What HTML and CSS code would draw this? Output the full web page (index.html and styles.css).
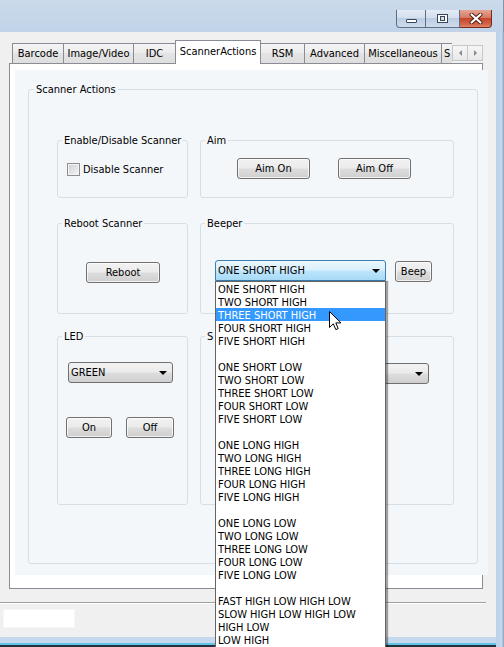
FILE: index.html
```html
<!DOCTYPE html>
<html>
<head>
<meta charset="utf-8">
<title>Scanner Actions</title>
<link rel="stylesheet" href="styles.css">
</head>
<body>
<div class="window">
  <div class="titlebar">
    <div class="caption-buttons">
      <div class="cbtn min"><span class="glyph-min"></span></div>
      <div class="cbtn max"><span class="glyph-max"><span class="glyph-max-inner"></span></span></div>
      <div class="cbtn close">
        <svg class="glyph-close" width="14" height="11" viewBox="0 0 14 11">
          <path d="M2.5 1.5 L11.5 9.5 M11.5 1.5 L2.5 9.5" stroke="#4a1a10" stroke-width="4" stroke-linecap="round"/>
          <path d="M2.5 1.5 L11.5 9.5 M11.5 1.5 L2.5 9.5" stroke="#ffffff" stroke-width="2.2" stroke-linecap="round"/>
        </svg>
      </div>
    </div>
  </div>

  <div class="client">
    <div class="tabctl">
      <div class="tabstrip">
        <div class="tabs">
          <div class="tab t-barcode">Barcode</div>
          <div class="tab t-image">Image/Video</div>
          <div class="tab t-idc">IDC</div>
          <div class="tab active">ScannerActions</div>
          <div class="tab t-rsm">RSM</div>
          <div class="tab t-adv">Advanced</div>
          <div class="tab t-misc">Miscellaneous</div>
          <div class="tab t-s">S</div>
        </div>
        <div class="tabscroll">
          <div class="sbtn"><span class="tri-left"></span></div>
          <div class="sbtn"><span class="tri-right"></span></div>
        </div>
      </div>
      <div class="panel">
        <div class="page">
          <div class="group main">
            <div class="legend">Scanner Actions</div>
            <div class="rows">
              <div class="row r1">
                <div class="group box-left">
                  <div class="legend">Enable/Disable Scanner</div>
                  <label class="check-line"><span class="checkbox"></span><span>Disable Scanner</span></label>
                </div>
                <div class="group box-right">
                  <div class="legend">Aim</div>
                  <div class="aim-buttons">
                    <div class="btn w73">Aim On</div>
                    <div class="btn w73">Aim Off</div>
                  </div>
                </div>
              </div>
              <div class="row r2">
                <div class="group box-left">
                  <div class="legend">Reboot Scanner</div>
                  <div class="btn reboot">Reboot</div>
                </div>
                <div class="group box-right">
                  <div class="legend">Beeper</div>
                  <div class="beeper-line">
                    <div class="combo open"><span>ONE SHORT HIGH</span><span class="arrow"></span></div>
                    <div class="btn beep">Beep</div>
                  </div>
                </div>
              </div>
              <div class="row r3">
                <div class="group box-left">
                  <div class="legend">LED</div>
                  <div class="combo led"><span>GREEN</span><span class="arrow"></span></div>
                  <div class="led-buttons">
                    <div class="btn on">On</div>
                    <div class="btn off">Off</div>
                  </div>
                </div>
                <div class="group box-right">
                  <div class="legend">S</div>
                  <div class="combo sound"><span class="arrow"></span></div>
                </div>
              </div>
            </div>
          </div>
        </div>
      </div>
    </div>
    <div class="separator"></div>
    <div class="statusbar"><div class="status-box"></div></div>
  </div>

  <div class="frame-right"></div>
  <div class="frame-bottom"></div>

  <ul class="droplist">
    <li>ONE SHORT HIGH</li>
    <li>TWO SHORT HIGH</li>
    <li class="selected">THREE SHORT HIGH</li>
    <li>FOUR SHORT HIGH</li>
    <li>FIVE SHORT HIGH</li>
    <li class="blank"></li>
    <li>ONE SHORT LOW</li>
    <li>TWO SHORT LOW</li>
    <li>THREE SHORT LOW</li>
    <li>FOUR SHORT LOW</li>
    <li>FIVE SHORT LOW</li>
    <li class="blank"></li>
    <li>ONE LONG HIGH</li>
    <li>TWO LONG HIGH</li>
    <li>THREE LONG HIGH</li>
    <li>FOUR LONG HIGH</li>
    <li>FIVE LONG HIGH</li>
    <li class="blank"></li>
    <li>ONE LONG LOW</li>
    <li>TWO LONG LOW</li>
    <li>THREE LONG LOW</li>
    <li>FOUR LONG LOW</li>
    <li>FIVE LONG LOW</li>
    <li class="blank"></li>
    <li>FAST HIGH LOW HIGH LOW</li>
    <li>SLOW HIGH LOW HIGH LOW</li>
    <li>HIGH LOW</li>
    <li>LOW HIGH</li>
  </ul>

  <svg class="cursor" width="13" height="20" viewBox="0 0 13 20">
    <path d="M0.5 0.5 L0.5 16.5 L4.3 12.8 L6.8 18.6 L9.2 17.6 L6.8 11.9 L12 11.9 Z" fill="#ffffff" stroke="#000000" stroke-width="1" stroke-linejoin="miter"/>
  </svg>
</div>
</body>
</html>
```

FILE: styles.css
```css
* { box-sizing: border-box; }

html, body {
  margin: 0;
  padding: 0;
}

body {
  width: 504px;
  height: 647px;
  overflow: hidden;
  font-family: "DejaVu Sans Condensed", "DejaVu Sans", sans-serif;
  font-stretch: condensed;
  font-size: 11px;
  color: #000;
  background: #c3d5e9;
}

.window {
  position: relative;
  width: 504px;
  height: 647px;
  overflow: hidden;
  display: grid;
  grid-template-columns: 496px 8px;
  grid-template-rows: 32px 605px 10px;
  background: #c3d5e9;
}

/* ---------- title bar ---------- */
.titlebar {
  grid-column: 1 / 3;
  grid-row: 1;
  background: linear-gradient(#cbdaeb, #c0d3e8);
  display: flex;
  justify-content: flex-end;
  padding: 10px 11px 0 0;
  border-right: 1px solid #8495a8;
}

.caption-buttons {
  display: flex;
  height: 18px;
}

.cbtn {
  height: 18px;
  display: flex;
  align-items: center;
  justify-content: center;
  border: 1px solid #5c6f86;
  border-top: none;
}

.cbtn.min {
  width: 30px;
  border-bottom-left-radius: 4px;
  background: linear-gradient(#e3ebf5, #d3e0ee 45%, #bccde2 50%, #cfdcec);
  align-items: flex-end;
  padding-bottom: 4px;
}

.cbtn.max {
  width: 34px;
  border-left: none;
  background: linear-gradient(#e3ebf5, #d3e0ee 45%, #bccde2 50%, #cfdcec);
}

.cbtn.close {
  width: 32px;
  border-left: none;
  border-color: #7a2b1c;
  border-bottom-right-radius: 4px;
  background: linear-gradient(#e6a595, #d67a63 45%, #c5452b 50%, #d3674c 85%, #e28a6f);
}

.glyph-min {
  width: 11px;
  height: 4px;
  background: #fff;
  border: 1px solid #36475c;
  border-radius: 1px;
}

.glyph-max {
  width: 11px;
  height: 9px;
  border: 1px solid #36475c;
  background: #fff;
  padding: 1px 2px;
  display: flex;
}

.glyph-max-inner {
  flex: 1;
  border: 1px solid #36475c;
  background: #d7e1ec;
}

/* ---------- frames ---------- */
.frame-right {
  grid-column: 2;
  grid-row: 2 / 4;
  background: linear-gradient(90deg, #bcd2ea, #c4d8ee 70%, #8ea1b5);
}

.frame-bottom {
  grid-column: 1;
  grid-row: 3;
  background: linear-gradient(#c4d8ee 0 6px, #63c3e4 6px 8px, #24323f 8px);
}

/* ---------- client ---------- */
.client {
  grid-column: 1;
  grid-row: 2;
  background: #f0f0f0;
  display: flex;
  flex-direction: column;
}

.tabctl {
  margin: 8px 0 0 9px;
  width: 474px;
}

.tabstrip {
  display: flex;
  height: 23px;
  align-items: flex-end;
}

.tabs {
  display: flex;
  align-items: flex-end;
  width: 443px;
  height: 25px;
  padding-left: 3px;
  overflow: hidden;
  align-self: flex-start;
}

.tab {
  height: 20px;
  margin-bottom: 2px;
  display: flex;
  align-items: center;
  justify-content: center;
  white-space: nowrap;
  border: 1px solid #898c95;
  border-bottom: none;
  margin-right: -1px;
  background: linear-gradient(#f5f5f5, #ebebeb 50%, #e3e3e3 50%, #dedede);
  flex: none;
}

.t-barcode { width: 52px; }
.t-image { width: 71px; }
.t-idc { width: 43px; }
.t-rsm { width: 45px; }
.t-adv { width: 61px; }
.t-misc { width: 78px; }
.t-s { width: 40px; justify-content: flex-start; padding-left: 2px; }

.tab.active {
  width: 86px;
  height: 24px;
  margin: 0 -1px 1px 0;
  padding-bottom: 2px;
  background: #fff;
  position: relative;
  z-index: 1;
}

.tabscroll {
  display: flex;
  margin-bottom: 2px;
  flex: none;
}

.sbtn {
  width: 16px;
  height: 16px;
  border: 1px solid #c5c7cb;
  background: linear-gradient(#f6f6f6, #e9e9e9);
  display: flex;
  align-items: center;
  justify-content: center;
  margin-right: -1px;
}

.tri-left {
  width: 0;
  height: 0;
  border-top: 3px solid transparent;
  border-bottom: 3px solid transparent;
  border-right: 3px solid #8a8a8a;
}

.tri-right {
  width: 0;
  height: 0;
  border-top: 3px solid transparent;
  border-bottom: 3px solid transparent;
  border-left: 3px solid #8a8a8a;
}

.panel {
  height: 526px;
  border: 1px solid #898c95;
  background: #fff;
  padding: 6px 0 0 5px;
}

.page {
  width: 473px;
  height: 505px;
  background: #f4f7fa;
  padding: 19px 0 0 13px;
}

/* ---------- group boxes ---------- */
.group {
  border: 1px solid #d5dfe5;
  border-radius: 3px;
}

.legend {
  margin: -7px 0 0 4px;
  padding: 0 2px;
  line-height: 13px;
  width: fit-content;
  background: #f4f7fa;
  white-space: nowrap;
}

.group.main {
  width: 450px;
  height: 475px;
}

.group.main > .legend {
  margin-left: 5px;
}

.rows {
  margin: 44px 0 0 28px;
  display: flex;
  flex-direction: column;
}

.row {
  display: flex;
  gap: 12px;
}

.row.r1 { height: 58px; }
.row.r2 { height: 91px; margin-top: 25px; }
.row.r3 { height: 169px; margin-top: 22px; }

.box-left { width: 131px; }
.box-right { width: 254px; }

/* ---------- controls ---------- */
.btn {
  height: 21px;
  border: 1px solid #707070;
  border-radius: 3px;
  background: linear-gradient(#f2f2f2, #ebebeb 48%, #dddddd 52%, #cfcfcf);
  box-shadow: inset 0 0 0 1px rgba(255, 255, 255, 0.7);
  display: flex;
  align-items: center;
  justify-content: center;
  white-space: nowrap;
}

.w73 { width: 73px; }

.check-line {
  display: flex;
  align-items: center;
  gap: 3px;
  margin: 16px 0 0 9px;
}

.checkbox {
  width: 13px;
  height: 13px;
  border: 1px solid #8e8f8f;
  background: linear-gradient(135deg, #cbcfd5, #f6f6f6);
  box-shadow: inset 0 0 0 1px #f4f4f4;
}

.aim-buttons {
  display: flex;
  gap: 28px;
  margin: 11px 0 0 36px;
}

.btn.reboot {
  width: 74px;
  margin: 32px 0 0 28px;
}

.beeper-line {
  display: flex;
  align-items: flex-start;
  gap: 9px;
  margin: 30px 0 0 14px;
}

.combo {
  height: 21px;
  border: 1px solid #707070;
  border-radius: 3px;
  background: linear-gradient(#f2f2f2, #ebebeb 48%, #dddddd 52%, #cfcfcf);
  display: flex;
  align-items: center;
  padding: 0 5px 0 2px;
  white-space: nowrap;
}

.combo .arrow {
  margin-left: auto;
  width: 0;
  height: 0;
  border-left: 4px solid transparent;
  border-right: 4px solid transparent;
  border-top: 4px solid #000;
}

.combo.open {
  width: 171px;
  border-color: #3c7fb1;
  border-radius: 3px 3px 0 0;
  background: linear-gradient(#eaf6fd, #d9f0fc 48%, #bee6fd 52%, #a7d9f5);
}

.btn.beep {
  width: 37px;
  margin-top: 1px;
}

.combo.led {
  width: 105px;
  margin: 19px 0 0 10px;
}

.led-buttons {
  display: flex;
  gap: 14px;
  margin: 34px 0 0 8px;
}

.btn.on { width: 46px; }
.btn.off { width: 48px; }

.combo.sound {
  width: 214px;
  margin: 20px 0 0 14px;
}

/* ---------- bottom of client ---------- */
.separator {
  margin-top: 13px;
  width: 486px;
  height: 2px;
  border-top: 1px solid #a0a0a0;
  border-bottom: 1px solid #ffffff;
}

.statusbar {
  flex: 1;
  padding: 5px 0 0 3px;
}

.status-box {
  width: 72px;
  height: 19px;
  background: #fff;
  border: 1px solid #f6f6f6;
}

/* ---------- popups ---------- */
.droplist {
  position: absolute;
  left: 215px;
  top: 281px;
  width: 171px;
  height: 400px;
  margin: 0;
  padding: 0;
  list-style: none;
  background: #fff;
  border: 1px solid #646464;
  box-shadow: 2px 0 1px rgba(0, 0, 0, 0.35);
}

.droplist li {
  height: 13px;
  line-height: 15px;
  padding-left: 2px;
  white-space: nowrap;
}

.droplist li.selected {
  background: #3399ff;
  color: #fff;
}

.cursor {
  position: absolute;
  left: 329px;
  top: 311px;
}
```
